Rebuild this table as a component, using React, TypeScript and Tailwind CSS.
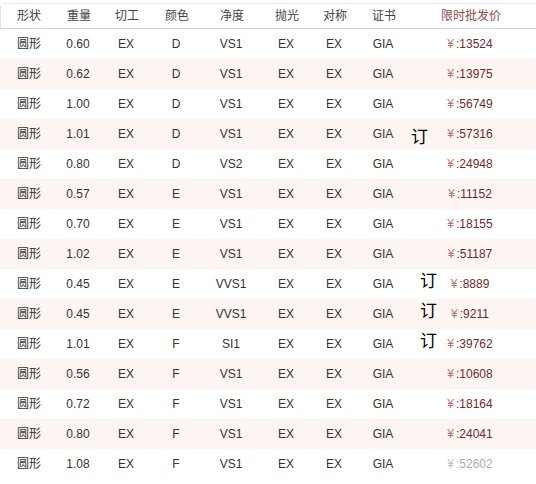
const cols = [
  'w-[58px]',
  'w-[40px]',
  'w-[56px]',
  'w-[44px]',
  'w-[66px]',
  'w-[44px]',
  'w-[52px]',
  'w-[46px]',
  'w-[128px]',
]

const headers = ['形状', '重量', '切工', '颜色', '净度', '抛光', '对称', '证书']

type Row = {
  weight: string
  color: string
  clarity: string
  price: string
  order?: 'a' | 'b'
  faded?: boolean
}

const rows: Row[] = [
  { weight: '0.60', color: 'D', clarity: 'VS1', price: '13524' },
  { weight: '0.62', color: 'D', clarity: 'VS1', price: '13975' },
  { weight: '1.00', color: 'D', clarity: 'VS1', price: '56749' },
  { weight: '1.01', color: 'D', clarity: 'VS1', price: '57316', order: 'a' },
  { weight: '0.80', color: 'D', clarity: 'VS2', price: '24948' },
  { weight: '0.57', color: 'E', clarity: 'VS1', price: '11152' },
  { weight: '0.70', color: 'E', clarity: 'VS1', price: '18155' },
  { weight: '1.02', color: 'E', clarity: 'VS1', price: '51187' },
  { weight: '0.45', color: 'E', clarity: 'VVS1', price: '8889', order: 'b' },
  { weight: '0.45', color: 'E', clarity: 'VVS1', price: '9211', order: 'b' },
  { weight: '1.01', color: 'F', clarity: 'SI1', price: '39762', order: 'b' },
  { weight: '0.56', color: 'F', clarity: 'VS1', price: '10608' },
  { weight: '0.72', color: 'F', clarity: 'VS1', price: '18164' },
  { weight: '0.80', color: 'F', clarity: 'VS1', price: '24041' },
  { weight: '1.08', color: 'F', clarity: 'VS1', price: '52602', faded: true },
]

export default function App() {
  return (
    <div className="h-[484px] w-[536px] overflow-hidden bg-white pt-[3px] font-['Liberation_Sans','Noto_Sans_CJK_SC',sans-serif] text-[12px] text-[#333]">
      <div className="flex h-[26px] items-center rounded-tl-[4px] border-l border-t border-b border-l-[#e4e4e4] border-t-[#e8e8e8] border-b-[#cfcfcf] text-[#444]">
        <div className={`${cols[0]} shrink-0 pl-[16px]`}>{headers[0]}</div>
        {headers.slice(1).map((h, i) => (
          <div key={h} className={`${cols[i + 1]} shrink-0 text-center`}>
            {h}
          </div>
        ))}
        <div className={`${cols[8]} shrink-0 text-center text-[#8c4747]`}>限时批发价</div>
      </div>

      {rows.map((r, i) => {
        const cells = [r.weight, 'EX', r.color, r.clarity, 'EX', 'EX', 'GIA']
        return (
          <div
            key={i}
            className={`flex h-[30px] items-center ${i % 2 === 1 ? 'bg-[#fdf5f1]' : 'bg-white'}`}
          >
            <div className={`${cols[0]} shrink-0 pl-[17px]`}>圆形</div>
            {cells.map((c, j) => (
              <div key={j} className={`${cols[j + 1]} shrink-0 text-center`}>
                {c}
              </div>
            ))}
            <div className={`relative ${cols[8]} shrink-0 text-center`}>
              {r.order && (
                <span
                  className={`absolute text-[17px] leading-none text-black ${
                    r.order === 'a' ? 'left-[5px] top-[4px]' : 'left-[14px] top-[-2px]'
                  }`}
                >
                  订
                </span>
              )}
              <span className={`mr-[2px] ${r.faded ? 'text-[#cbbcbc]' : 'text-[#c07070]'}`}>¥</span>
              <span className={r.faded ? 'text-[#b5a8a8]' : 'text-[#6e2a2a]'}>:{r.price}</span>
            </div>
          </div>
        )
      })}
    </div>
  )
}
